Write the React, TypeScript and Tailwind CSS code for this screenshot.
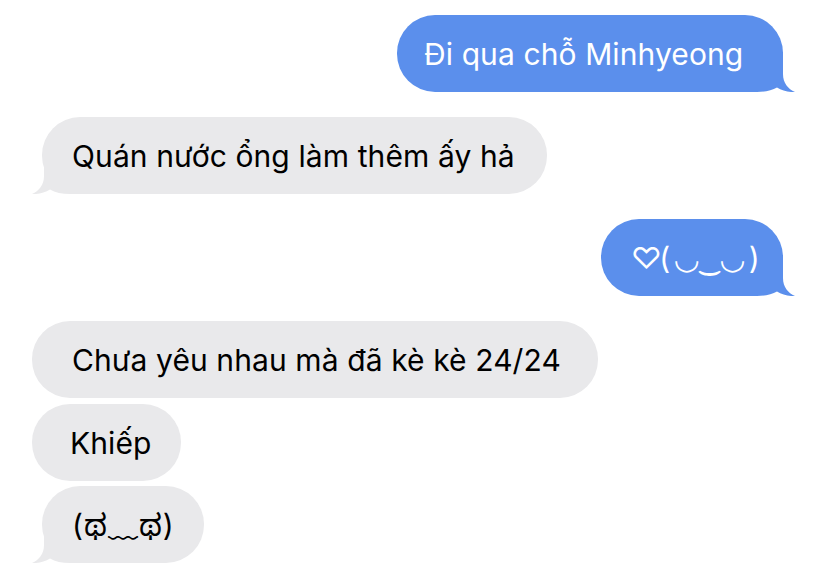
import React from "react";

type Msg = {
  text: string;
  me: boolean;
  tail: boolean;
  w: string;
  pl: string;
  mt: string;
  ml?: string;
  tr?: string;
};

const msgs: Msg[] = [
  { text: "Đi qua chỗ Minhyeong", me: true, tail: true, w: "w-[386px]", pl: "pl-[27px]", mt: "mt-[15px]" },
  { text: "Quán nước ổng làm thêm ấy hả", me: false, tail: true, w: "w-[505px]", pl: "pl-[30px]", mt: "mt-[25px]", ml: "ml-[42px]" },
  { text: "♡( ◡‿◡ )", me: true, tail: true, w: "w-[182px]", pl: "pl-[30px]", mt: "mt-[25px]", tr: "tracking-[-2.5px]" },
  { text: "Chưa yêu nhau mà đã kè kè 24/24", me: false, tail: false, w: "w-[566px]", pl: "pl-[40px]", mt: "mt-[25px]", ml: "ml-[32px]" },
  { text: "Khiếp", me: false, tail: false, w: "w-[149px]", pl: "pl-[38px]", mt: "mt-[6px]", ml: "ml-[32px]" },
  { text: "(ಥ﹏ಥ)", me: false, tail: true, w: "w-[162px]", pl: "pl-[30px]", mt: "mt-[5px]", ml: "ml-[42px]", tr: "tracking-[1px]" },
];

function Tail({ me }: { me: boolean }) {
  return (
    <svg
      width="50"
      height="40"
      viewBox="0 0 50 40"
      className={
        me
          ? "absolute bottom-0 -right-[12px] text-[#5b8fec]"
          : "absolute bottom-0 -left-[10px] -scale-x-100 text-[#e9e9eb]"
      }
    >
      <path
        d="M0 0 H38 V22 C38 31 43 37 50 40 C44 40.5 37 38.5 32 35.5 C27 38.5 20 40 12 40 H0 Z"
        fill="currentColor"
      />
    </svg>
  );
}

function Bubble({ m }: { m: Msg }) {
  return (
    <div className={`flex ${m.me ? "justify-end pr-[45px]" : "justify-start"} ${m.mt}`}>
      <div
        className={`relative flex h-[77px] items-center rounded-[38px] ${m.w} ${m.pl} ${m.ml ?? ""} ${
          m.me ? "bg-[#5b8fec] text-white" : "bg-[#e9e9eb] text-black"
        }`}
      >
        <span className={`relative z-10 whitespace-nowrap text-[30px] leading-none ${m.tr ?? "tracking-[0.1px]"}`}>
          {m.text}
        </span>
        {m.tail && <Tail me={m.me} />}
      </div>
    </div>
  );
}

export default function App() {
  return (
    <div className="h-[580px] w-[828px] overflow-hidden bg-white font-['Inter','Noto_Sans','Noto_Sans_Kannada','DejaVu_Sans','Noto_Sans_CJK_JP',sans-serif]">
      {msgs.map((m, i) => (
        <Bubble key={i} m={m} />
      ))}
    </div>
  );
}
